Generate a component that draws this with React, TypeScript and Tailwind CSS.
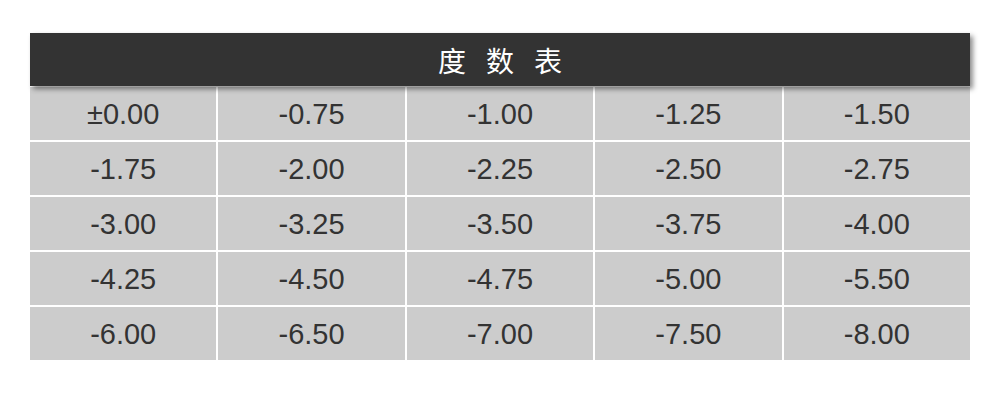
const rows = [
  ['±0.00', '-0.75', '-1.00', '-1.25', '-1.50'],
  ['-1.75', '-2.00', '-2.25', '-2.50', '-2.75'],
  ['-3.00', '-3.25', '-3.50', '-3.75', '-4.00'],
  ['-4.25', '-4.50', '-4.75', '-5.00', '-5.50'],
  ['-6.00', '-6.50', '-7.00', '-7.50', '-8.00'],
]

export default function App() {
  return (
    <div className="w-[1000px] h-[400px] bg-white pt-[33px] pl-[30px]" style={{ fontFamily: '"Liberation Sans", Arial, sans-serif' }}>
      <div className="w-[940px]">
        <div className="relative z-10 h-[53px] bg-[#333333] text-white flex items-center justify-center shadow-[3px_3px_5px_rgba(0,0,0,0.45)]">
          <span
            className="text-[28px] tracking-[20px] pl-[20px]"
            style={{ fontFamily: '"Noto Sans CJK SC", "Noto Sans CJK JP", sans-serif' }}
          >
            度数表
          </span>
        </div>
        <div className="grid grid-cols-5 gap-[2px] bg-white pt-[1px]">
          {rows.flat().map((v, i) => (
            <div key={i} className="h-[53px] bg-[#cccccc] flex items-center justify-center pt-[2px] text-[29px] text-[#333333]">
              {v}
            </div>
          ))}
        </div>
      </div>
    </div>
  )
}
